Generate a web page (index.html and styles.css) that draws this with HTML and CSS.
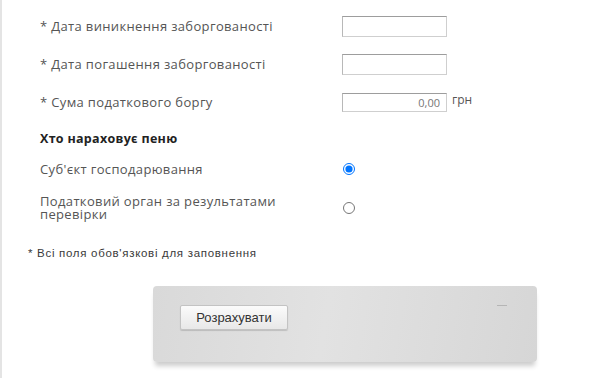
FILE: index.html
```html
<!DOCTYPE html>
<html lang="uk">
<head>
    <meta charset="UTF-8">
    <meta name="viewport" content="width=device-width, initial-scale=1.0">
    <title>Калькулятор пені</title>
    <link rel="stylesheet" href="styles.css">
</head>
<body>
    <div class="calc-container">
        <div class="calc-form">
            <div class="form-row">
                <label class="field-label" for="debt-start">* Дата виникнення заборгованості</label>
                <div class="field"><input type="text" id="debt-start" class="text-input"></div>
            </div>
            <div class="form-row">
                <label class="field-label" for="debt-end">* Дата погашення заборгованості</label>
                <div class="field"><input type="text" id="debt-end" class="text-input"></div>
            </div>
            <div class="form-row">
                <label class="field-label" for="debt-sum">* Сума податкового боргу</label>
                <div class="field">
                    <input type="text" id="debt-sum" class="text-input sum-input" value="0,00">
                    <span class="currency">грн</span>
                </div>
            </div>

            <h3 class="section-title">Хто нараховує пеню</h3>

            <div class="form-row radio-row">
                <label class="field-label" for="who-subject">Суб'єкт господарювання</label>
                <div class="field"><input type="radio" name="who" id="who-subject" checked></div>
            </div>
            <div class="form-row radio-row">
                <label class="field-label" for="who-tax">Податковий орган за результатами перевірки</label>
                <div class="field"><input type="radio" name="who" id="who-tax"></div>
            </div>
        </div>

        <p class="required-note">* Всі поля обов'язкові для заповнення</p>

        <!-- Submit panel -->
        <div class="submit-panel">
            <span class="panel-mark"></span>
            <button type="button" class="calc-button">Розрахувати</button>
        </div>
    </div>
</body>
</html>
```

FILE: styles.css
```css
/* General Styles */
body {
    margin: 0;
    padding: 0;
    background: #fff;
    font-family: "Open Sans", Arial, sans-serif;
    color: #555;
}

.calc-container {
    min-height: 378px;
    border-left: 2px solid #e4e4e4;
    box-sizing: border-box;
}

.calc-form {
    padding: 16px 0 0 38px;
}

.form-row {
    display: grid;
    grid-template-columns: 302px 1fr;
    align-items: center;
    height: 21px;
    margin-bottom: 17px;
}

.field-label {
    font-size: 13px;
    line-height: 13px;
    letter-spacing: 0.35px;
}

.field {
    display: flex;
    align-items: center;
}

.text-input {
    width: 105px;
    height: 21px;
    box-sizing: border-box;
    border: 1px solid #cfcfcf;
    border-top-color: #9d9d9d;
    border-left-color: #b8b8b8;
    padding: 0 6px;
    font-family: "Open Sans", Arial, sans-serif;
    font-size: 11px;
    color: #777;
    outline: none;
}

.sum-input {
    text-align: right;
    height: 19px;
}

.currency {
    margin-left: 5px;
    margin-top: -6px;
    font-size: 12px;
    color: #555;
}

.section-title {
    margin: 14px 0 12px;
    font-size: 12.5px;
    font-weight: bold;
    letter-spacing: 0.3px;
    color: #222;
}

.radio-row {
    margin-bottom: 14px;
}

.radio-row:last-child {
    height: 28px;
    margin-bottom: 0;
}

.radio-row .field-label {
    padding-right: 30px;
}

.radio-row input[type="radio"] {
    margin: -1px 0 0 1px;
    width: 12px;
    height: 12px;
}

.required-note {
    margin: 25px 0 0 26px;
    font-family: "Liberation Sans", Arial, sans-serif;
    font-size: 11.5px;
    letter-spacing: 0.7px;
    color: #3a3a3a;
}

/* Submit panel */
.submit-panel {
    position: relative;
    margin: 27px 0 0 151px;
    width: 384px;
    height: 76px;
    box-sizing: border-box;
    padding: 19px 0 0 27px;
    border-radius: 4px;
    background: linear-gradient(100deg, #d9d9d9 0%, #e2e2e2 45%, #d6d6d6 100%);
    box-shadow: 0 6px 5px -2px rgba(0, 0, 0, 0.2);
}

.panel-mark {
    position: absolute;
    top: 19px;
    right: 30px;
    width: 10px;
    height: 1px;
    background: #b5b5b5;
}

.calc-button {
    width: 108px;
    height: 25px;
    border: 1px solid #c3c3c3;
    border-radius: 2px;
    background: linear-gradient(#fbfbfb, #e8e8e8);
    box-shadow: 0 1px 1px rgba(0, 0, 0, 0.15);
    font-family: "Liberation Sans", Arial, sans-serif;
    font-size: 13px;
    color: #333;
    cursor: pointer;
}
```
